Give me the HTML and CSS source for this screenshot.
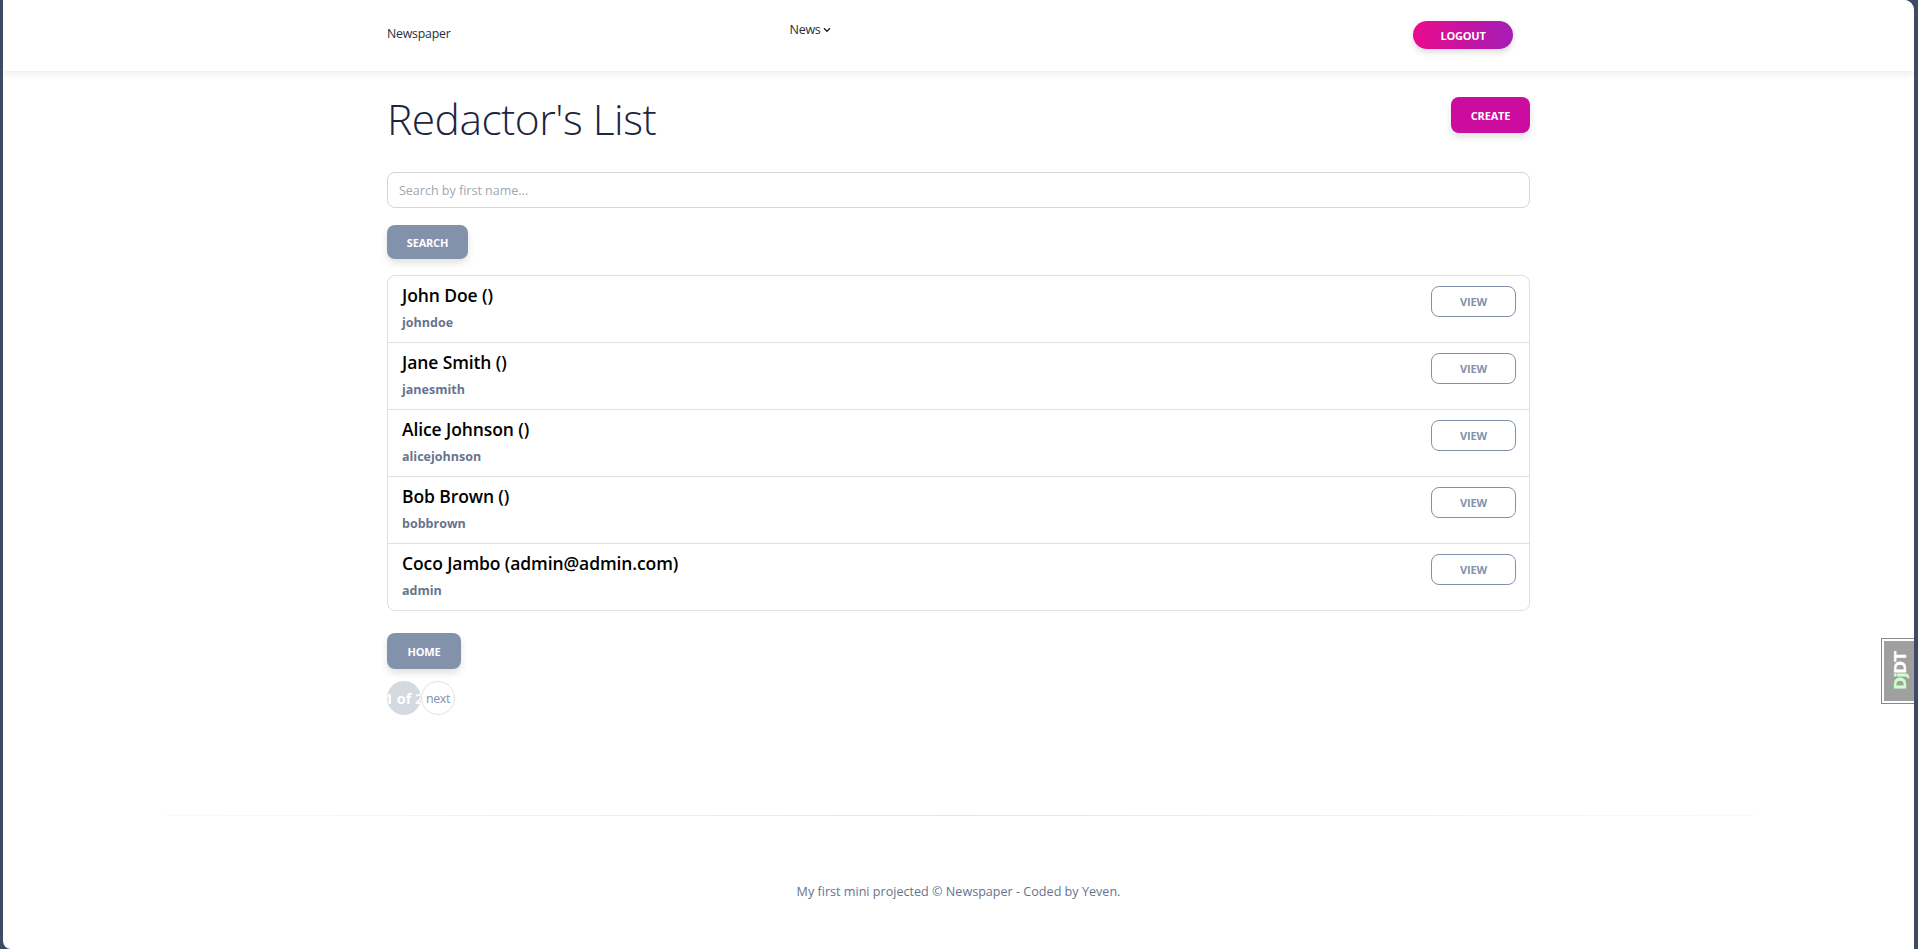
FILE: index.html
```html
<!DOCTYPE html>
<html lang="en">
<head>
<meta charset="utf-8">
<title>Redactor's List</title>
<link rel="stylesheet" href="styles.css">
</head>
<body>
<div class="frame">
  <nav class="navbar">
    <div class="nav-inner">
      <a class="brand" href="#">Newspaper</a>
      <div class="nav-links">
        <a class="nav-link" href="#">News <svg class="chev" width="8" height="6" viewBox="0 0 8 6"><path d="M1 1.2 L4 4.2 L7 1.2" fill="none" stroke="#222" stroke-width="1.4"/></svg></a>
      </div>
      <a class="btn btn-logout" href="#">Logout</a>
    </div>
  </nav>

  <main class="container">
    <div class="title-row">
      <h1 class="title">Redactor's List</h1>
      <a class="btn btn-create" href="#">Create</a>
    </div>

    <form class="search-form">
      <input class="search-input" type="text" placeholder="Search by first name...">
      <button class="btn btn-secondary btn-search" type="button">Search</button>
    </form>

    <ul class="list">
      <li class="list-item">
        <div class="item-text">
          <div class="item-name">John Doe ()</div>
          <div class="item-user">johndoe</div>
        </div>
        <a class="btn btn-outline" href="#">View</a>
      </li>
      <li class="list-item">
        <div class="item-text">
          <div class="item-name">Jane Smith ()</div>
          <div class="item-user">janesmith</div>
        </div>
        <a class="btn btn-outline" href="#">View</a>
      </li>
      <li class="list-item">
        <div class="item-text">
          <div class="item-name">Alice Johnson ()</div>
          <div class="item-user">alicejohnson</div>
        </div>
        <a class="btn btn-outline" href="#">View</a>
      </li>
      <li class="list-item">
        <div class="item-text">
          <div class="item-name">Bob Brown ()</div>
          <div class="item-user">bobbrown</div>
        </div>
        <a class="btn btn-outline" href="#">View</a>
      </li>
      <li class="list-item">
        <div class="item-text">
          <div class="item-name">Coco Jambo (admin@admin.com)</div>
          <div class="item-user">admin</div>
        </div>
        <a class="btn btn-outline" href="#">View</a>
      </li>
    </ul>

    <a class="btn btn-secondary btn-home" href="#">Home</a>

    <div class="pagination">
      <span class="page current">1 of 2</span>
      <a class="page next" href="#">next</a>
    </div>
  </main>

  <footer class="footer">
    <hr class="footer-line">
    <p class="footer-text">My first mini projected © Newspaper - Coded by Yeven.</p>
  </footer>

  <div class="djdt"><span class="dj">Dj</span>DT</div>
</div>
</body>
</html>
```

FILE: styles.css
```css
* { box-sizing: border-box; }

html, body {
  margin: 0;
  padding: 0;
  background: #3d4b66;
}

body {
  font-family: "Open Sans", "Noto Sans", sans-serif;
  color: #67748e;
}

.frame {
  position: relative;
  margin: 0 4px 0 3px;
  min-height: 949px;
  background: #ffffff;
  border-radius: 0 10px 0 8px;
  overflow: hidden;
}

a { text-decoration: none; }

/* navbar */
.navbar {
  height: 71px;
  background: #fff;
  box-shadow: 0 2px 8px rgba(0, 0, 0, 0.09);
}

.nav-inner {
  width: 1143px;
  margin: 0 auto;
  height: 100%;
  display: flex;
  align-items: center;
  padding-right: 17px;
}

.brand {
  font-size: 12.3px;
  color: #252f40;
  letter-spacing: -0.2px;
  margin-top: -4px;
}

.nav-links {
  margin-left: 339px;
  padding-bottom: 13px;
}

.nav-link {
  font-size: 12.5px;
  color: #252f40;
  letter-spacing: -0.3px;
  display: flex;
  align-items: center;
  gap: 3px;
}

.chev { margin-top: 1px; }

.btn {
  display: inline-flex;
  align-items: center;
  justify-content: center;
  font-family: "Open Sans", sans-serif;
  font-weight: 700;
  font-size: 11px;
  text-transform: uppercase;
  color: #fff;
  border: 0;
  cursor: pointer;
  letter-spacing: -0.2px;
}

.btn-logout {
  margin-left: auto;
  width: 100px;
  height: 28px;
  margin-top: -1px;
  border-radius: 14px;
  background: linear-gradient(90deg, #ea0a8c 0%, #a41db6 100%);
  box-shadow: 0 3px 6px rgba(0, 0, 0, 0.15);
}

/* main */
.container {
  width: 1143px;
  margin: 0 auto;
}

.title-row {
  display: flex;
  justify-content: space-between;
  align-items: flex-start;
  margin-top: 26px;
}

.title {
  margin: -4px 0 0;
  font-weight: 300;
  font-size: 42.5px;
  line-height: 1.2;
  height: 56px;
  color: #1c2541;
  letter-spacing: -0.5px;
}

.btn-create {
  width: 79px;
  height: 36px;
  border-radius: 8px;
  background: #cb0c9f;
  box-shadow: 0 4px 7px rgba(0, 0, 0, 0.12);
}

.search-form {
  margin-top: 23px;
  display: flex;
  flex-direction: column;
  align-items: flex-start;
  gap: 17px;
}

.search-input {
  width: 100%;
  height: 36px;
  border: 1px solid #d2d6da;
  border-radius: 8px;
  padding: 0 11px;
  font-family: "Open Sans", sans-serif;
  font-size: 12.5px;
  color: #495057;
  outline: none;
}

.search-input::placeholder { color: #a0a7b4; }

.btn-secondary {
  background: #8392ab;
  border-radius: 8px;
  box-shadow: 0 4px 7px rgba(0, 0, 0, 0.12);
}

.btn-search {
  width: 81px;
  height: 34px;
}

.list {
  list-style: none;
  margin: 16px 0 0;
  padding: 0;
  border: 1px solid #dcdfe3;
  border-radius: 8px;
}

.list-item {
  height: 67px;
  display: flex;
  justify-content: space-between;
  align-items: flex-start;
  padding: 9px 13px 0 14px;
  border-top: 1px solid #dcdfe3;
}

.list-item:first-child { border-top: 0; height: 66px; }

.item-name {
  font-size: 17.5px;
  font-weight: 600;
  color: #000;
  line-height: 21px;
  letter-spacing: -0.1px;
}

.item-user {
  margin-top: 8px;
  font-size: 12.5px;
  font-weight: 700;
  color: #67748e;
  line-height: 17px;
}

.btn-outline {
  width: 85px;
  height: 31px;
  margin-top: 1px;
  border: 1px solid #8392ab;
  border-radius: 8px;
  color: #8392ab;
  background: #fff;
  font-size: 11px;
}

.btn-home {
  margin-top: 22px;
  width: 74px;
  height: 36px;
}

.pagination {
  margin-top: 12px;
  display: flex;
  align-items: center;
}

.page {
  width: 34px;
  height: 34px;
  border-radius: 50%;
  display: flex;
  align-items: center;
  justify-content: center;
  font-size: 13px;
  white-space: nowrap;
  overflow: hidden;
}

.page.current {
  background: #d5d9e0;
  color: #fff;
  font-weight: 700;
  font-size: 14.5px;
}

.page.next {
  background: #fff;
  border: 1px solid #dee2e6;
  color: #8392ab;
  font-size: 12.5px;
  letter-spacing: -0.4px;
}

/* footer */
.footer {
  margin-top: 100px;
  text-align: center;
}

.footer-line {
  margin: 0 auto;
  width: 1590px;
  height: 1px;
  border: 0;
  background: linear-gradient(90deg, rgba(0,0,0,0.02), rgba(0,0,0,0.1) 50%, rgba(0,0,0,0.02));
}

.footer-text {
  margin: 67px 0 0;
  font-size: 12.6px;
  color: #67748e;
}

/* debug toolbar handle */
.djdt {
  position: absolute;
  right: -4px;
  top: 639px;
  width: 36px;
  height: 64px;
  background: #a0a0a0;
  border: 2px solid #fff;
  outline: 1px solid #888;
  color: #fff;
  font-family: "DejaVu Sans", sans-serif;
  font-weight: 700;
  font-size: 16px;
  writing-mode: vertical-rl;
  transform: rotate(180deg);
  display: flex;
  align-items: center;
  justify-content: center;
  letter-spacing: -1px;
}

.dj { color: #cfc; }
```
